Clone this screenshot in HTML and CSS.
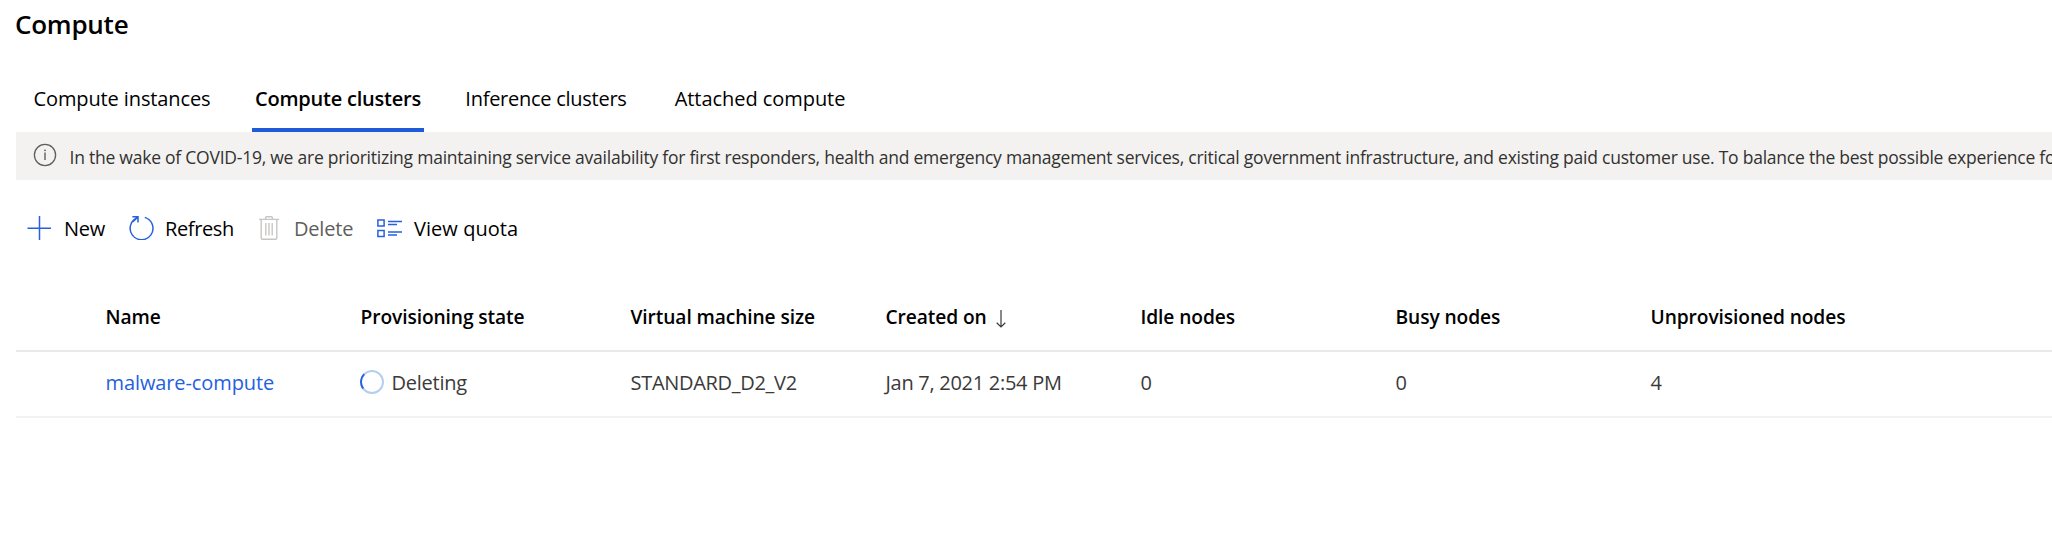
FILE: index.html
```html
<!DOCTYPE html>
<html lang="en">
<head>
<meta charset="utf-8">
<title>Compute</title>
<link rel="stylesheet" href="styles.css">
</head>
<body>
<main class="page">
  <h1 class="title">Compute</h1>
  <nav class="tabs">
    <a class="tab tab-instances">Compute instances</a>
    <a class="tab tab-clusters active">Compute clusters</a>
    <a class="tab tab-inference">Inference clusters</a>
    <a class="tab tab-attached">Attached compute</a>
  </nav>
  <div class="banner">
    <svg class="info" width="24" height="24" viewBox="0 0 24 24" fill="none"><circle cx="12" cy="12" r="10.6" stroke="#605e5c" stroke-width="1.3"/><path d="M12 9.6v7.4" stroke="#605e5c" stroke-width="1.4"/><circle cx="12" cy="7.3" r=".9" fill="#605e5c"/></svg>
    <span class="message">In the wake of COVID-19, we are prioritizing maintaining service availability for first responders, health and emergency management services, critical government infrastructure, and existing paid customer use. To balance the best possible experience fo</span>
  </div>
  <div class="toolbar">
    <button class="command new">
      <svg width="24" height="24" viewBox="0 0 24 24" fill="none" stroke="#2560e0" stroke-width="1.5"><path d="M12.5 0v24M.5 12.2H24"/></svg>
      <span>New</span>
    </button>
    <button class="command refresh">
      <svg width="25" height="24" viewBox="0 0 25 24" fill="none" stroke="#2560e0" stroke-width="1.5"><path d="M15.8 1.4A11.4 11.4 0 1 1 9 1.5M3.4.8h5.6v5.7M8.8 1L4 5.7"/></svg>
      <span>Refresh</span>
    </button>
    <button class="command delete">
      <svg width="20" height="24" viewBox="0 0 20 24" fill="none" stroke="#c8c6c4" stroke-width="1.4"><path d="M0 3.4h20M6.6 3.2V1.9Q6.6.8 7.7.8h4.6q1.1 0 1.1 1.1v1.3M2.2 3.6v17.8q0 1.9 1.9 1.9h11.8q1.9 0 1.9-1.9V3.6M6.8 7v12.6M10 7v12.6M13.2 7v12.6"/></svg>
      <span>Delete</span>
    </button>
    <button class="command quota">
      <svg width="25" height="19" viewBox="0 0 25 19" fill="none" stroke="#2560e0" stroke-width="1.5"><path d="M.9 1.1h6.2v6H.9zM.9 11.6h6.2v6H.9zM11 2.4h14M11 5.4h9M11 12.9h14M11 15.9h9"/></svg>
      <span>View quota</span>
    </button>
  </div>
  <section class="table">
    <div class="row head">
      <span></span>
      <span>Name</span>
      <span>Provisioning state</span>
      <span>Virtual machine size</span>
      <span class="sorted">Created on<svg width="10" height="18" viewBox="0 0 10 18" fill="none" stroke="#3b3a39" stroke-width="1.2"><path d="M5 0v17M.7 12.8L5 17l4.3-4.2"/></svg></span>
      <span>Idle nodes</span>
      <span>Busy nodes</span>
      <span>Unprovisioned nodes</span>
    </div>
    <div class="row item">
      <span></span>
      <a class="link">malware-compute</a>
      <span class="state"><svg width="24" height="24" viewBox="0 0 24 24" fill="none" stroke-width="1.9"><circle cx="12" cy="12" r="11" stroke="#b3cdf5"/><path d="M4.2 4.2A11 11 0 0 0 3.2 18.6" stroke="#2560e0"/></svg>Deleting</span>
      <span class="size">STANDARD_D2_V2</span>
      <span class="date">Jan 7, 2021 2:54 PM</span>
      <span>0</span>
      <span>0</span>
      <span>4</span>
    </div>
  </section>
</main>
</body>
</html>
```
FILE: styles.css
```css
* { box-sizing: border-box; }
body {
  margin: 0;
  background: #fff;
  color: #000;
  font: 20px/28px "Open Sans", "Noto Sans", sans-serif;
  overflow: hidden;
}
.page { width: 100%; height: 538px; padding-left: 16px; overflow: hidden; }
.title {
  height: 72px;
  margin: 0 0 0 -1px;
  padding-top: 6px;
  font-size: 26px;
  font-weight: 600;
  line-height: 36px;
  letter-spacing: -0.25px;
}
.tabs { display: flex; height: 60px; padding-left: 17px; }
.tab { height: 60px; padding-top: 13px; text-align: center; white-space: nowrap; }
.tab-instances { width: 178px; letter-spacing: -0.12px; }
.tab-clusters { width: 172px; margin-left: 41px; letter-spacing: -0.22px; }
.tab-inference { width: 166px; margin-left: 39px; letter-spacing: -0.26px; }
.tab-attached { width: 176px; margin-left: 43px; letter-spacing: -0.05px; }
.active { border-bottom: 4px solid #1f5bd8; font-weight: 600; }
.banner {
  display: flex;
  gap: 12.5px;
  height: 48px;
  padding: 11px 0 0 17px;
  background: #f3f2f1;
  color: #323130;
  overflow: hidden;
}
.info { flex: none; }
.message {
  font-size: 17.5px;
  letter-spacing: -0.236px;
  white-space: nowrap;
}
.toolbar { display: flex; height: 96px; padding: 34px 0 0 11px; }
.command {
  display: flex;
  align-items: center;
  height: 28px;
  padding: 0;
  border: 0;
  background: none;
  color: inherit;
  font: inherit;
  white-space: nowrap;
}
.command svg { flex: none; }
.command span { padding-top: 2px; }
.new { width: 102px; gap: 13px; letter-spacing: -0.3px; }
.refresh { width: 130px; gap: 11px; letter-spacing: -0.37px; }
.delete { width: 118px; gap: 15px; color: #605e5c; letter-spacing: -0.2px; }
.quota { gap: 12px; letter-spacing: 0.05px; }
.row {
  display: grid;
  grid-template-columns: 89.5px 255px 270px 255px 255px 255px 255px 1fr;
  align-items: start;
  white-space: nowrap;
}
.head {
  height: 76px;
  padding-top: 27px;
  border-bottom: 2px solid #e9e9e9;
  font-size: 19.2px;
  font-weight: 600;
  letter-spacing: -0.1px;
}
.sorted { display: flex; align-items: center; gap: 9px; }
.sorted svg { margin-top: 3px; }
.item {
  height: 66px;
  padding-top: 17px;
  border-bottom: 2px solid #f3f2f1;
  color: #3b3a39;
  letter-spacing: -0.25px;
}
.link { color: #2560e0; letter-spacing: -0.1px; }
.state { display: flex; align-items: center; gap: 8px; }
.state svg { margin: -2px 0 0 -1px; }
.size { letter-spacing: -0.3px; }
.date { letter-spacing: -0.28px; }
```
